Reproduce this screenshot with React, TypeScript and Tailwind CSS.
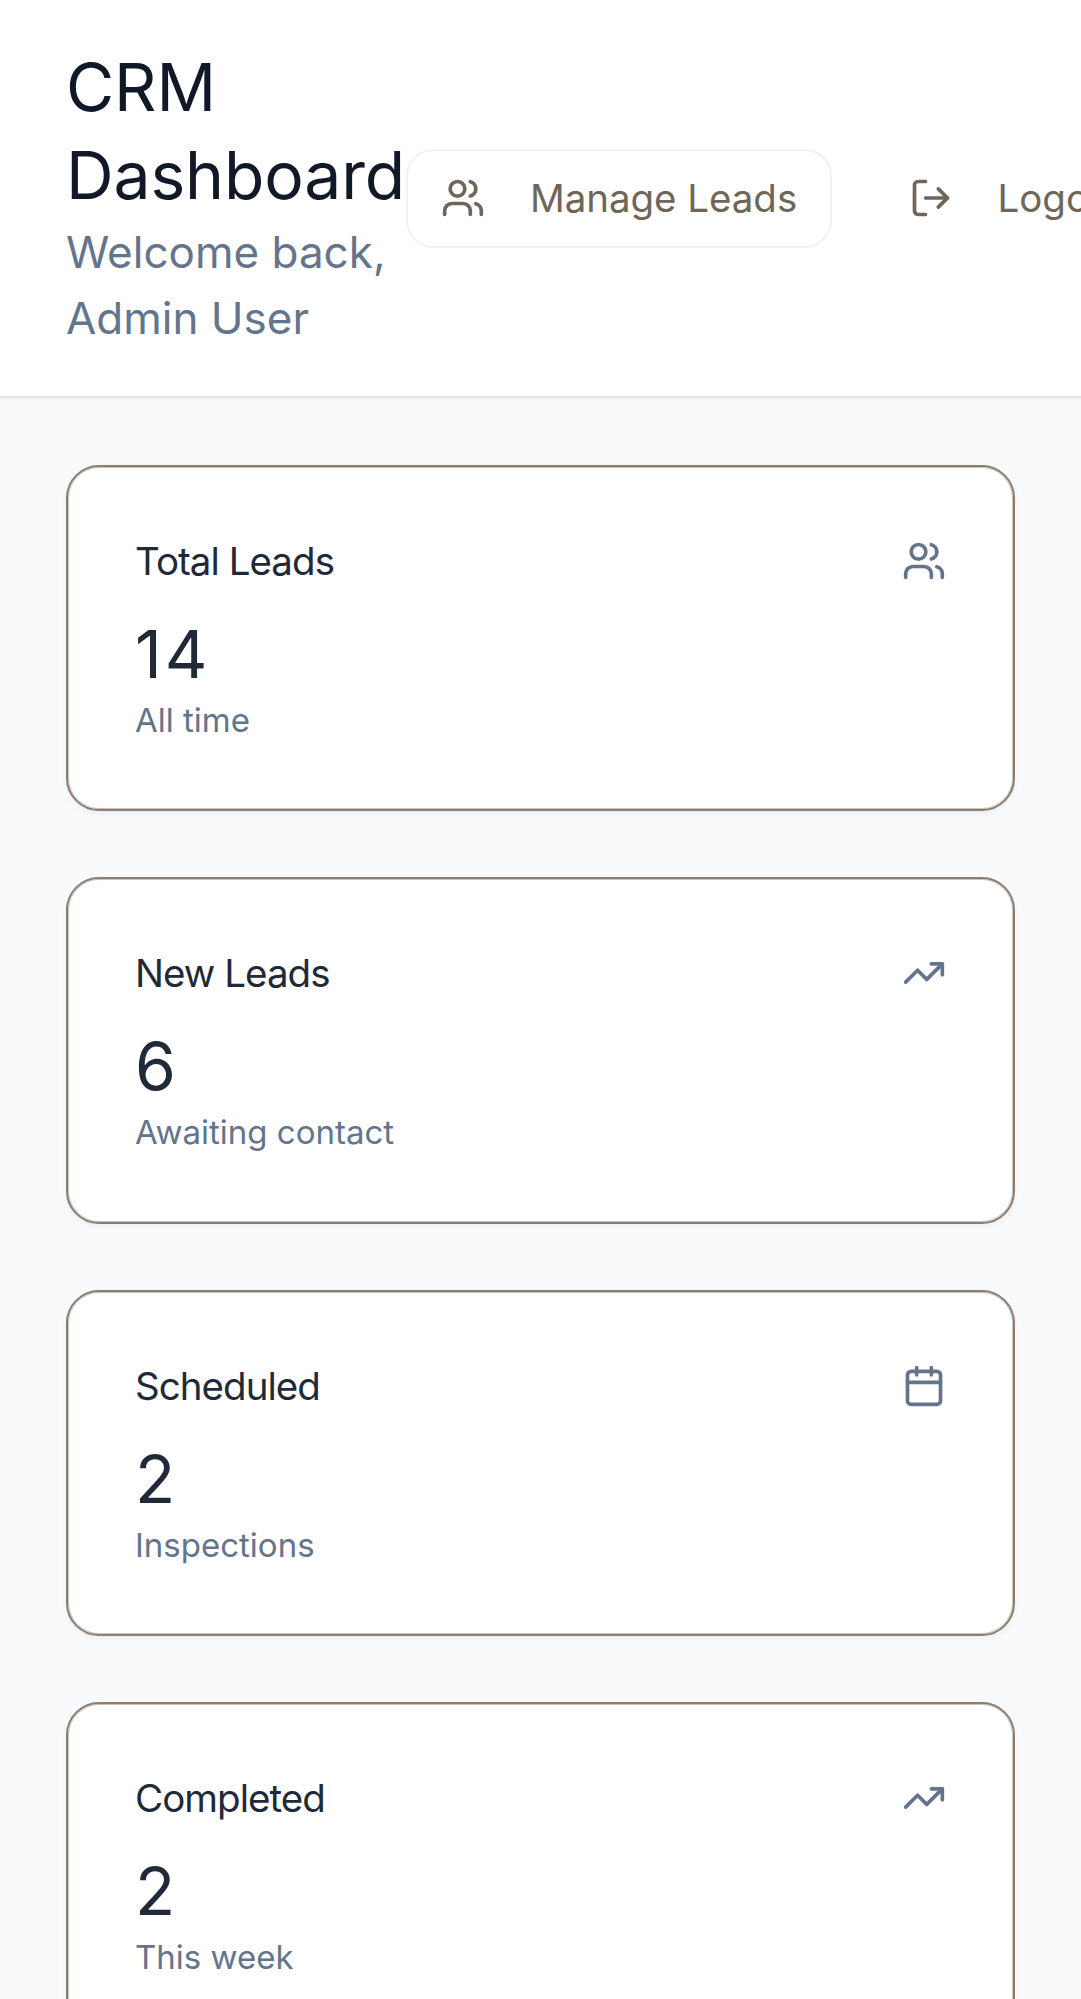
import React from "react";
import { Calendar, LogOut, TrendingUp, Users, type LucideIcon } from "lucide-react";

type Stat = { title: string; value: string; note: string; icon: LucideIcon };

const stats: Stat[] = [
  { title: "Total Leads", value: "14", note: "All time", icon: Users },
  { title: "New Leads", value: "6", note: "Awaiting contact", icon: TrendingUp },
  { title: "Scheduled", value: "2", note: "Inspections", icon: Calendar },
  { title: "Completed", value: "2", note: "This week", icon: TrendingUp },
];

function StatCard({ title, value, note, icon: Icon }: Stat) {
  return (
    <section className="rounded-[33px] border-2 border-[#8b7e70] bg-white px-[67px] pt-[66px] pb-[67.5px] shadow-[inset_0_0_0_1px_#c9c3bb,0_2.75px_5.5px_rgba(0,0,0,0.05)]">
      <div className="flex items-center justify-between pb-[20.5px]">
        <h3 className="text-[38.5px] leading-[56.5px] tracking-[-0.025em] text-[#1f2937]">{title}</h3>
        <Icon className="size-[44px] text-[#64748b]" />
      </div>
      <div className="text-[66px] leading-[88px] tracking-[3px] text-[#1f2937]">{value}</div>
      <p className="text-[33px] leading-[44px] text-[#64748b]">{note}</p>
    </section>
  );
}

export default function App() {
  return (
    <div className="h-[1999px] w-full overflow-hidden bg-[#f8fafc] font-['Inter',sans-serif]">
      <header className="flex items-center border-b-2 border-[#e5e7eb] bg-white px-[66px] pt-[43px] pb-[45px] shadow-[0_1px_0_#f0f2f5]">
        <div className="w-[340px] shrink-0">
          <h1 className="text-[66px] leading-[88px] tracking-[-0.15px] text-[#111827]">CRM Dashboard</h1>
          <p className="text-[44px] leading-[66px] text-[#64748b]">Welcome back, Admin User</p>
        </div>
        <nav className="flex shrink-0 items-center gap-[44px] pt-[2px] text-[38.5px] leading-[55px] text-[#6f6558]">
          <button className="flex h-[99px] w-[425.5px] items-center gap-[45px] rounded-[27.5px] border-2 border-[#f1f1f0] pl-[33px] tracking-[-0.05px] whitespace-nowrap">
            <Users className="size-[44px] shrink-0" />
            Manage Leads
          </button>
          <button className="flex h-[99px] items-center gap-[45px] px-[33px] whitespace-nowrap">
            <LogOut className="size-[44px] shrink-0" />
            Logout
          </button>
        </nav>
      </header>
      <main className="grid gap-[66px] px-[66px] pt-[66.5px]">
        {stats.map((s) => (
          <StatCard key={s.title} {...s} />
        ))}
      </main>
    </div>
  );
}
